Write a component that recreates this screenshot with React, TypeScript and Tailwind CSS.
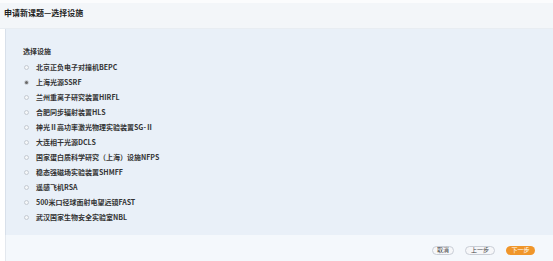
import React from "react";

const items = [
  "北京正负电子对撞机BEPC",
  "上海光源SSRF",
  "兰州重离子研究装置HIRFL",
  "合肥同步辐射装置HLS",
  "神光Ⅱ高功率激光物理实验装置SG-Ⅱ",
  "大连相干光源DCLS",
  "国家蛋白质科学研究（上海）设施NFPS",
  "稳态强磁场实验装置SHMFF",
  "遥感飞机RSA",
  "500米口径球面射电望远镜FAST",
  "武汉国家生物安全实验室NBL",
];

export default function App() {
  return (
    <div
      className="w-[553px] h-[261px] bg-white flex flex-col text-[#333] overflow-hidden"
      style={{ fontFamily: '"Noto Sans CJK SC", "Liberation Sans", sans-serif' }}
    >
      <div className="h-[3px] bg-[#fbfcfd]" />
      <div className="h-[26px] bg-[#f3f6f9] flex items-start pt-[5px] pl-[4px] border-b border-[#e8edf2]">
        <span className="text-[8px] font-bold text-[#222] leading-[10px]">申请新课题—选择设施</span>
      </div>
      <div className="flex-1 flex flex-col pl-[5px]">
        <div className="flex-1 bg-[#e9f0f8] border-l border-[#d8e0ea] pl-[17px] pt-[19px] flex flex-col">
          <div className="text-[7px] font-bold text-[#333] leading-none mb-[8px]">选择设施</div>
          <div className="flex flex-col gap-[7px]">
            {items.map((t, i) => (
              <div key={i} className="flex items-center h-[8px]">
                <span className="w-[5px] h-[5px] rounded-full border border-[#c4cad2] bg-[#f4f6f8] flex items-center justify-center ml-[1px] mr-[7px]">
                  {i === 1 && <span className="w-[3px] h-[3px] rounded-full bg-[#666]" />}
                </span>
                <span className="text-[7px] font-bold text-[#333] leading-none">{t}</span>
              </div>
            ))}
          </div>
        </div>
        <div className="h-[26px] bg-[#f4f8fc] border-l border-[#e3e8ee] flex items-center justify-end pr-[18px] pt-[4px] gap-[11px]">
          <button className="h-[9px] w-[22px] rounded-full border border-[#c9ced6] bg-[#f6f7f9] text-[6px] text-[#444] leading-none flex items-center justify-center">取消</button>
          <button className="h-[9px] w-[30px] rounded-full border border-[#c9ced6] bg-[#f6f7f9] text-[6px] text-[#444] leading-none flex items-center justify-center">上一步</button>
          <button className="h-[9px] w-[29px] rounded-full bg-[#f0962a] text-[6px] text-white leading-none flex items-center justify-center">下一步</button>
        </div>
      </div>
    </div>
  );
}
